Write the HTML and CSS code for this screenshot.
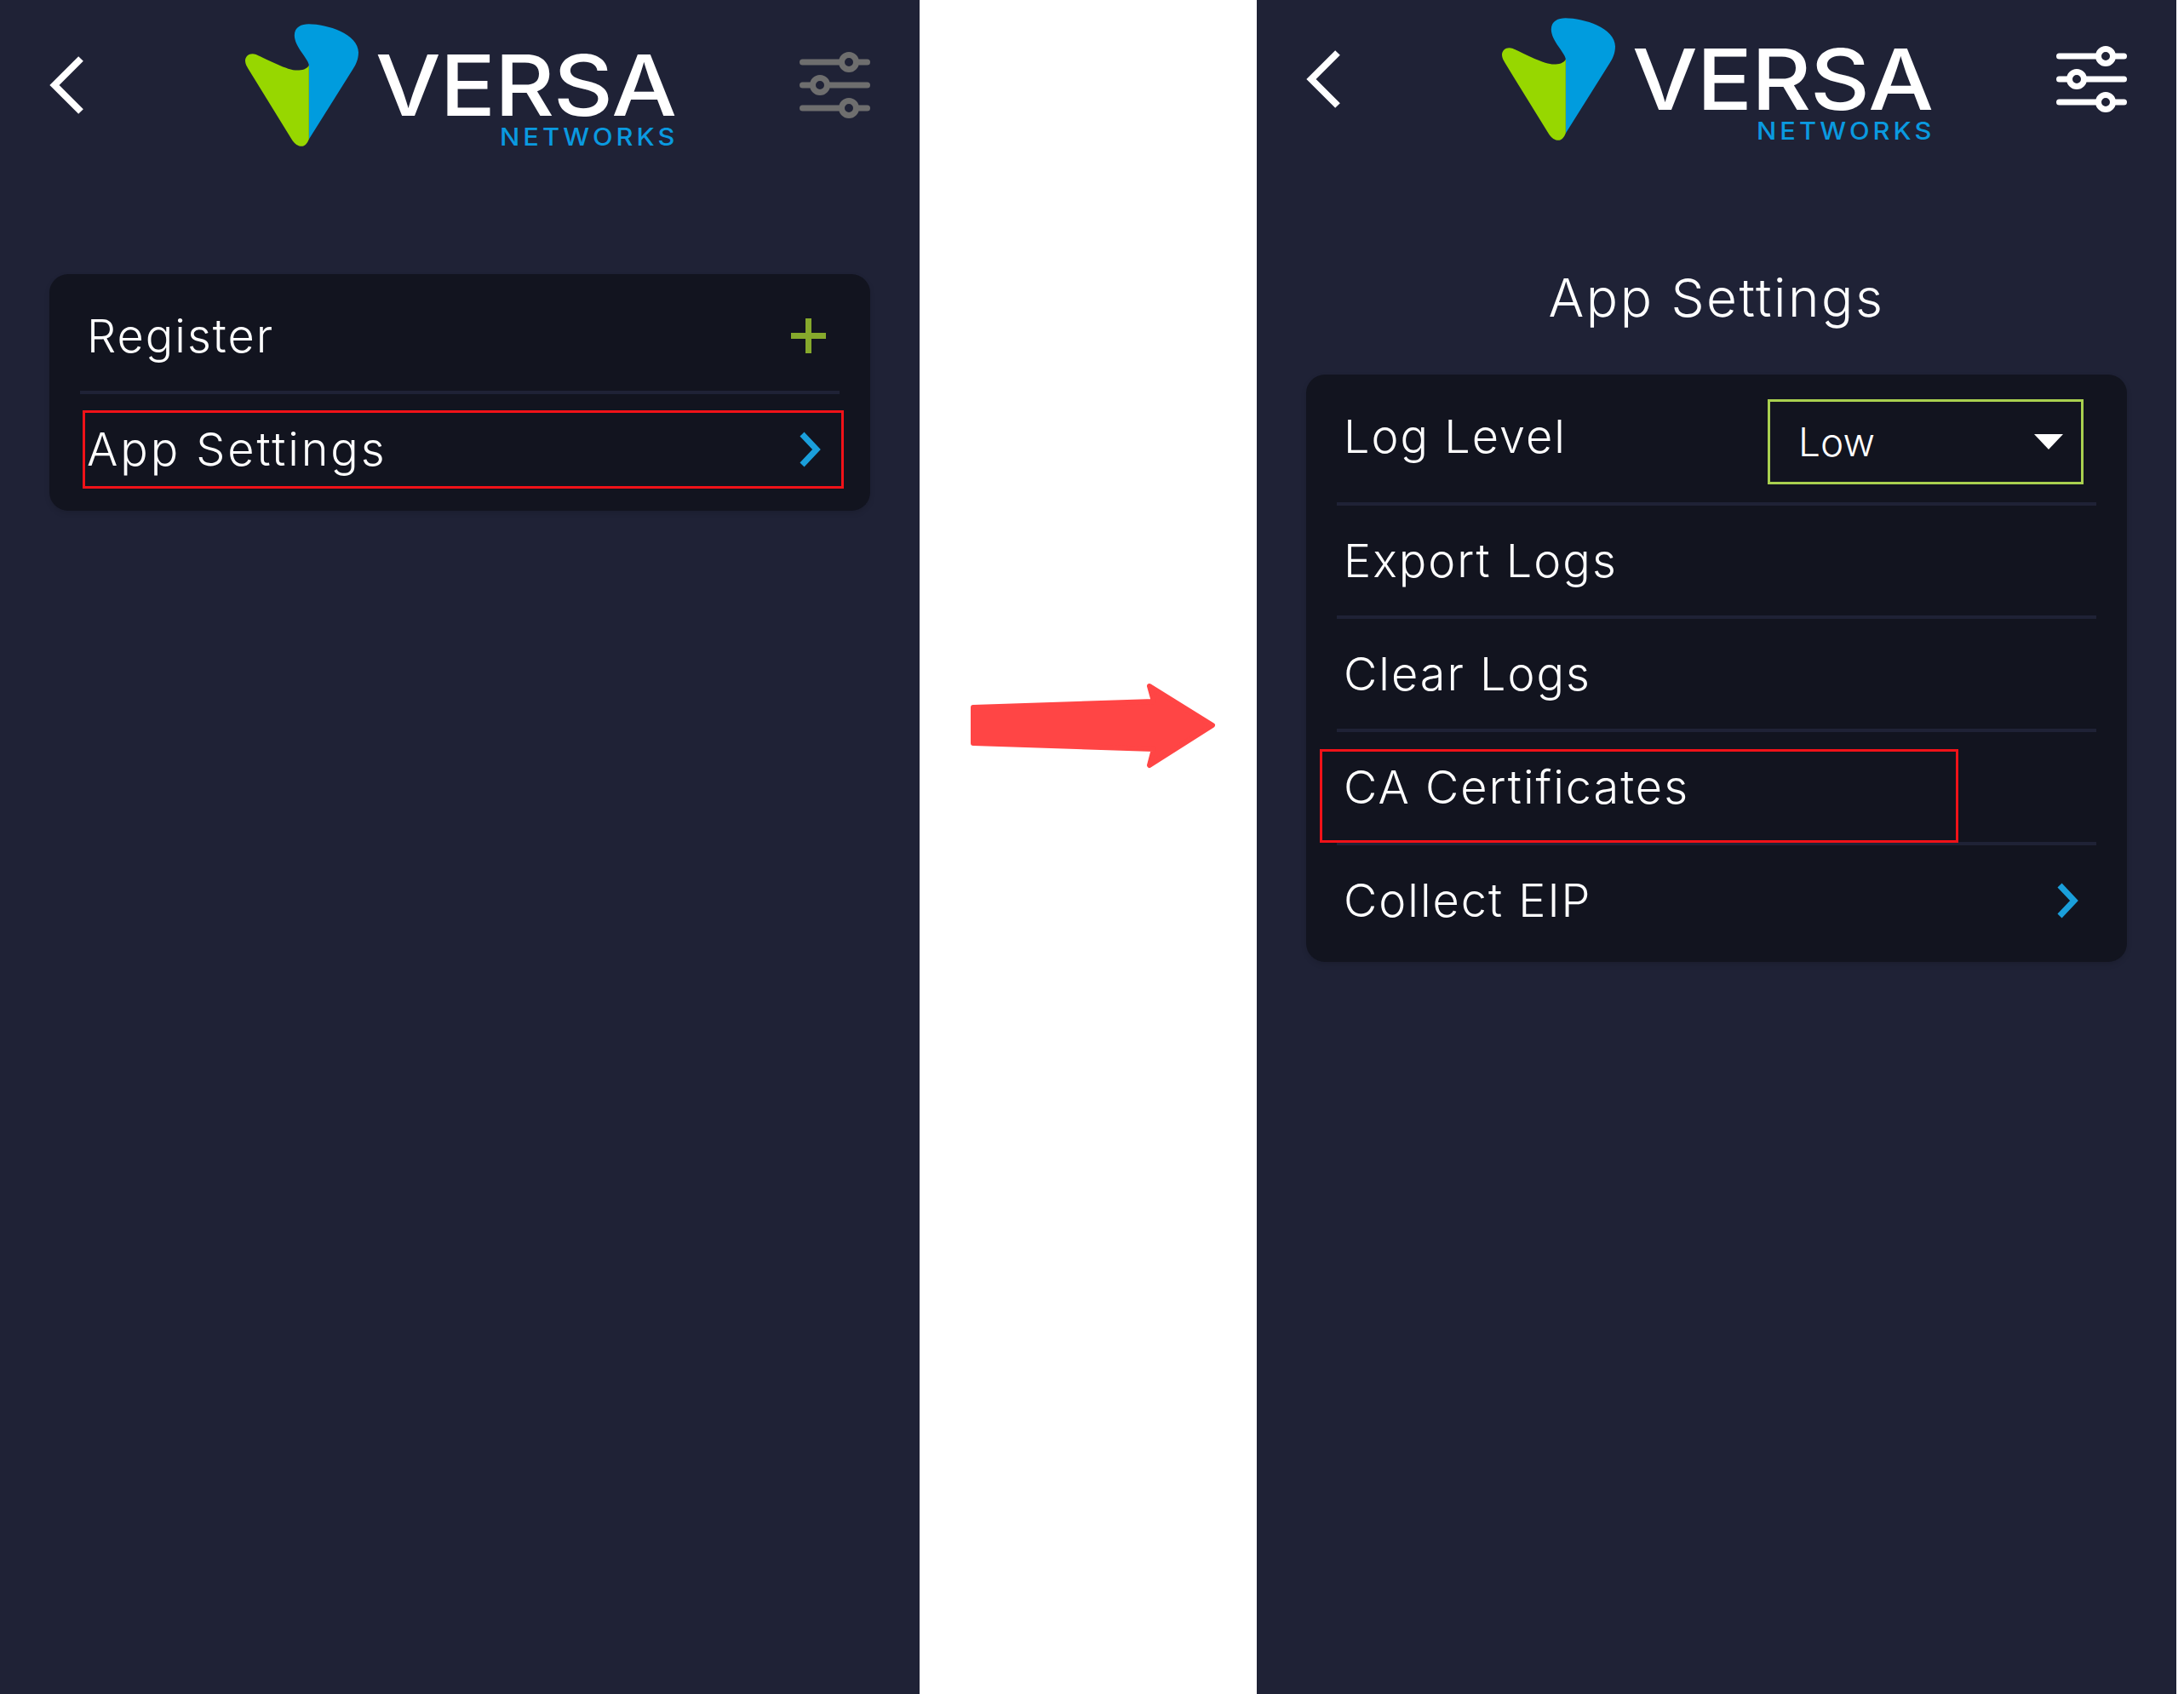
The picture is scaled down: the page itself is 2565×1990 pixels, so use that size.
FILE: index.html
```html
<!DOCTYPE html>
<html lang="en">
<head>
<meta charset="utf-8">
<title>Versa Networks</title>
<link rel="stylesheet" href="styles.css">
</head>
<body>
<svg class="defs" width="0" height="0" aria-hidden="true">
  <defs>
    <symbol id="mark" viewBox="52 25 398 430">
      <path fill="#009cde" d="M276 430V170C276 150 225 105 225 65C225 35 250 25 275 25C340 25 450 60 450 125C450 150 440 170 430 185Z"/>
      <path fill="#97d700" d="M276 170C270 185 250 188 235 188C200 188 130 150 90 132C70 125 52 135 52 155C52 165 58 175 62 182L215 430C225 448 240 455 250 455C262 455 270 445 276 430Z"/>
    </symbol>
    <symbol id="sliders" viewBox="0 0 83 80">
      <g fill="none" stroke="currentColor" stroke-width="7" stroke-linecap="round">
        <path d="M3.500 13H49M68 13H79.500"/>
        <path d="M3.500 40H15M34 40H79.500"/>
        <path d="M3.500 67H49M68 67H79.500"/>
        <circle cx="58" cy="13" r="8.500"/>
        <circle cx="24" cy="40" r="8.500"/>
        <circle cx="58" cy="67" r="8.500"/>
      </g>
    </symbol>
    <symbol id="back" viewBox="0 0 40 68">
      <path fill="none" stroke="#fff" stroke-width="8" d="M37 3L6 34L37 65"/>
    </symbol>
    <symbol id="next" viewBox="0 0 26 42">
      <path fill="none" stroke="#1a9fdb" stroke-width="7" d="M3 3L20 21L3 39"/>
    </symbol>
  </defs>
</svg>

<main class="page">
  <section class="panel">
    <header class="topbar topbar-tall">
      <svg class="back"><use href="#back"/></svg>
      <div class="brand">
        <svg class="mark"><use href="#mark"/></svg>
        <div class="words"><span class="versa">VERSA</span><span class="networks">NETWORKS</span></div>
      </div>
      <svg class="sliders sliders-muted"><use href="#sliders"/></svg>
    </header>
    <div class="content content-home">
      <div class="card">
        <div class="row"><span class="label">Register</span>
          <svg class="plus" viewBox="0 0 41 41"><path fill="#86a92c" d="M17 0h7v17h17v7H24v17h-7V24H0v-7h17z"/></svg>
        </div>
        <div class="row"><span class="label label-wide">App Settings</span>
          <svg class="next next-home"><use href="#next"/></svg>
        </div>
        <div class="mark-box mark-box-app"></div>
      </div>
    </div>
  </section>

  <div class="gutter">
    <svg class="arrow" viewBox="0 0 290 106"><path fill="#ff4545" stroke="#ff4545" stroke-width="6" stroke-linejoin="round" d="M3 29L215 22L210 4L284 50L210 97L215 78L3 71Z"/></svg>
  </div>

  <section class="panel">
    <header class="topbar topbar-short">
      <svg class="back"><use href="#back"/></svg>
      <div class="brand">
        <svg class="mark"><use href="#mark"/></svg>
        <div class="words"><span class="versa">VERSA</span><span class="networks">NETWORKS</span></div>
      </div>
      <svg class="sliders"><use href="#sliders"/></svg>
    </header>
    <h1 class="title">App Settings</h1>
    <div class="content">
      <div class="card">
        <div class="row row-select"><span class="label">Log Level</span>
          <div class="select"><span>Low</span><i class="caret"></i></div>
        </div>
        <div class="row"><span class="label">Export Logs</span></div>
        <div class="row"><span class="label">Clear Logs</span></div>
        <div class="row"><span class="label">CA Certificates</span></div>
        <div class="row"><span class="label">Collect EIP</span>
          <svg class="next"><use href="#next"/></svg>
        </div>
        <div class="mark-box mark-box-ca"></div>
      </div>
    </div>
  </section>
</main>
</body>
</html>
```
FILE: styles.css
```css
* { box-sizing: border-box; }
html, body { margin: 0; padding: 0; background: #fff; }
body { font-family: Inter, "Liberation Sans", sans-serif; color: #fff; overflow: hidden; }
.defs { position: absolute; }

.page { display: flex; width: 2565px; height: 1990px; }
.panel { flex: 0 0 1080px; height: 1990px; background: #1f2236; }
.gutter { flex: 0 0 396px; display: flex; align-items: flex-start; padding: 802px 0 0 60px; }
.arrow { width: 290px; height: 106px; display: block; }

.topbar { display: flex; align-items: center; padding: 0 58px; }
.topbar-tall { height: 200px; }
.topbar-short { height: 186px; }
.back { width: 40px; height: 68px; flex: none; }
.brand { display: flex; align-items: flex-start; height: 144px; margin-left: 190px; }
.mark { width: 133px; height: 144px; flex: none; }
.words { display: flex; flex-direction: column; align-items: flex-start; margin-left: 20px; padding-top: 36px; }
.versa { font-size: 99px; line-height: 72px; font-weight: 500; letter-spacing: -1px; transform: scaleX(1.094); transform-origin: left center; }
.networks { font-size: 28px; line-height: 20px; font-weight: 500; letter-spacing: 3.7px; color: #0a9ae0; margin: 15px 0 0 146px; transform: scaleX(1.1); transform-origin: left center; }
.sliders { width: 83px; height: 80px; flex: none; margin-left: auto; color: #fff; }
.sliders-muted { color: #6e6e6e; }

.title { margin: 0; height: 254px; padding-top: 129px; text-align: center; font-size: 62px; line-height: 70px; font-weight: 300; letter-spacing: 2.5px; }
.content { padding: 0 58px; }
.content-home { padding-top: 122px; }

.card { position: relative; background: #12141f; border-radius: 22px; padding: 8px 36px; box-shadow: 0 3px 6px rgba(0,0,0,.12); }
.row { display: flex; align-items: center; justify-content: space-between; height: 133px; padding: 0 20px 0 8px; border-bottom: 4px solid #1f2236; }
.row:nth-last-child(2) { border-bottom: 0; height: 129px; }
.row-select { height: 146px; align-items: flex-start; padding: 0 15px 0 8px; }
.label { font-size: 54px; line-height: 129px; font-weight: 300; letter-spacing: 2px; white-space: nowrap; }
.label-wide { letter-spacing: 2.9px; }

.select { display: flex; align-items: center; justify-content: space-between; width: 371px; height: 100px; margin-top: 21px; padding: 0 21px 0 33px; border: 3px solid #a9d04f; font-size: 46px; font-weight: 300; }
.caret { width: 0; height: 0; border-left: 17px solid transparent; border-right: 17px solid transparent; border-top: 18px solid #fff; }

.plus { width: 41px; height: 41px; margin-right: -4px; }
.next { width: 26px; height: 42px; }
.next-home { margin-right: 1px; }

.mark-box { position: absolute; border: 3px solid #f01218; pointer-events: none; }
.mark-box-app { left: 39px; top: 160px; width: 894px; height: 92px; }
.mark-box-ca { left: 16px; top: 440px; width: 750px; height: 110px; }
```
